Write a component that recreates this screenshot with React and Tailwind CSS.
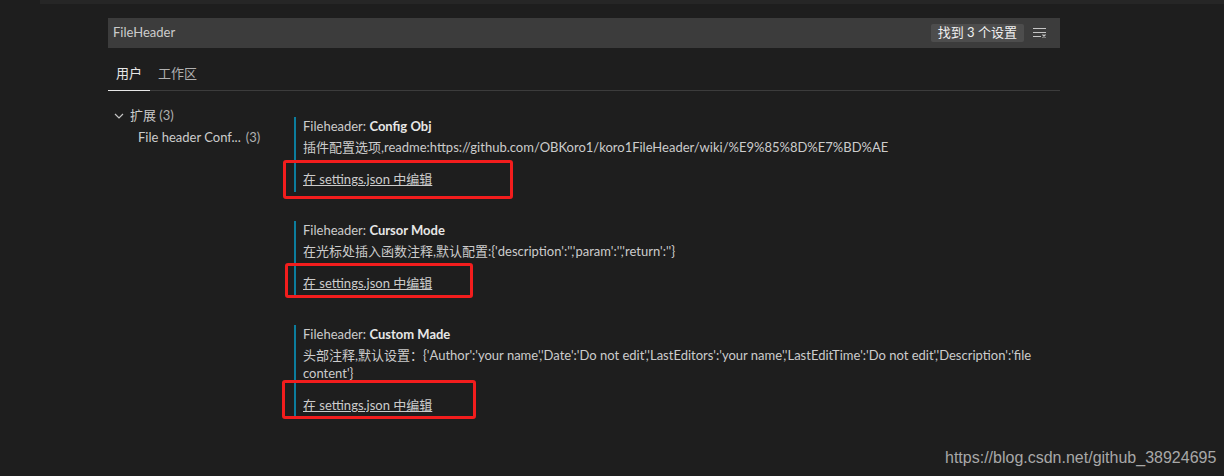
const font = { fontFamily: 'Lato, "Noto Sans CJK SC", sans-serif' };

const settings = [
    {
        name: 'Config Obj',
        desc: '插件配置选项,readme:https://github.com/OBKoro1/koro1FileHeader/wiki/%E9%85%8D%E7%BD%AE',
    },
    {
        name: 'Cursor Mode',
        desc: "在光标处插入函数注释,默认配置:{'description':'','param':'','return':''}",
    },
    {
        name: 'Custom Made',
        desc: "头部注释,默认设置：{'Author':'your name','Date':'Do not edit','LastEditors':'your name','LastEditTime':'Do not edit','Description':'file content'}",
    },
];

const ClearIcon = () => (
    <svg width="15" height="12" viewBox="0 0 15 12" fill="none">
        <path d="M1 1.5h13M1 5.5h13M1 9.5h8" stroke="#c5c5c5" strokeWidth="1" />
        <path d="M10.5 7.5l3 3M13.5 7.5l-3 3" stroke="#c5c5c5" strokeWidth="1.2" />
    </svg>
);

const Chevron = () => (
    <svg width="10" height="10" viewBox="0 0 10 10" fill="none">
        <path d="M1 3l4 4 4-4" stroke="#c5c5c5" strokeWidth="1.2" />
    </svg>
);

const App = () => {
    return (
        <div className="relative w-[1224px] h-[476px] bg-[#1e1e1e] text-[13px] text-[#cccccc] overflow-hidden" style={font}>
            <div className="ml-[40px] h-[4px] bg-[#262626]" />

            <div className="pl-[108px] w-[1060px]">
                {/* search box */}
                <div className="mt-[14px] h-[30px] bg-[#3c3c3c] flex items-center pl-[5px] pr-[13px]">
                    <span className="flex-1 text-[#cccccc]">FileHeader</span>
                    <span className="h-[18px] px-[7px] flex items-center rounded-[2px] bg-[#4d4d4d] text-[#f0f0f0]">找到 3 个设置</span>
                    <span className="ml-[8px] flex items-center"><ClearIcon /></span>
                </div>

                {/* tabs */}
                <div className="flex h-[43px] border-b border-[#3c3c3c]">
                    <div className="px-[8px] pt-[9px] flex items-center text-[#e7e7e7] border-b border-[#e7e7e7] -mb-px">用户</div>
                    <div className="px-[8px] pt-[9px] flex items-center text-[#b0b0b0]">工作区</div>
                </div>

                <div className="flex">
                    {/* tree */}
                    <div className="w-[186px] pt-[14px]">
                        <div className="h-[22px] flex items-center pl-[6px]">
                            <Chevron />
                            <span className="ml-[6px]">扩展 <span className="text-[#b0b0b0]">(3)</span></span>
                        </div>
                        <div className="h-[22px] flex items-center pl-[30px]">
                            File header Conf... <span className="ml-[5px] text-[#b0b0b0]">(3)</span>
                        </div>
                    </div>

                    {/* settings list */}
                    <div className="flex-1 pt-[29px]">
                        {settings.map((s, i) => (
                            <div key={i} className="border-l-2 border-[#0c7d9d] pl-[7px] pb-[4px] mb-[32px] leading-[18px]">
                                <div className="-mt-[3px]">
                                    Fileheader: <span className="font-bold text-[#e7e7e7]">{s.name}</span>
                                </div>
                                <div className="mt-[3px] pr-[10px]">{s.desc}</div>
                                <div className="mt-[14px] underline">在 settings.json 中编辑</div>
                            </div>
                        ))}
                    </div>
                </div>
            </div>

            {/* annotation boxes */}
            <div className="absolute left-[283px] top-[160px] w-[230px] h-[39px] border-[3px] border-[#f21d1d] rounded-[3px]" />
            <div className="absolute left-[285px] top-[263px] w-[188px] h-[35px] border-[3px] border-[#f21d1d] rounded-[3px]" />
            <div className="absolute left-[282px] top-[380px] w-[194px] h-[39px] border-[3px] border-[#f21d1d] rounded-[3px]" />

            {/* watermark */}
            <div className="absolute left-[945px] top-[446px] text-[16px] text-[#a8a8a8]" style={{ fontFamily: '"Liberation Sans", Arial, sans-serif' }}>
                https://blog.csdn.net/github_38924695
            </div>
        </div>
    );
};

export default App;
